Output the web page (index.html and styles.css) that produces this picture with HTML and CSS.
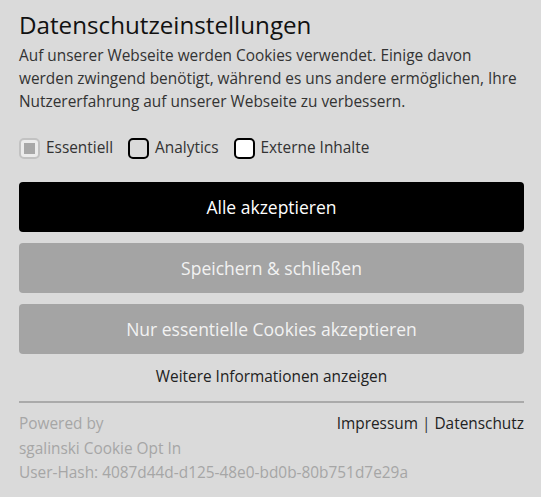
FILE: index.html
```html
<!DOCTYPE html>
<html lang="de">
<head>
<meta charset="utf-8">
<link rel="stylesheet" href="styles.css">
</head>
<body>
<div class="box">
  <h1 class="title">Datenschutzeinstellungen</h1>
  <p class="text">Auf unserer Webseite werden Cookies verwendet. Einige davon werden zwingend benötigt, während es uns andere ermöglichen, Ihre Nutzererfahrung auf unserer Webseite zu verbessern.</p>
  <div class="checks">
    <label class="check"><span class="cb cb-disabled"><span class="cb-fill"></span></span>Essentiell</label>
    <label class="check"><span class="cb cb-grey"></span>Analytics</label>
    <label class="check"><span class="cb cb-white"></span>Externe Inhalte</label>
  </div>
  <div class="buttons">
    <button class="btn btn-primary">Alle akzeptieren</button>
    <button class="btn btn-secondary">Speichern &amp; schließen</button>
    <button class="btn btn-secondary">Nur essentielle Cookies akzeptieren</button>
  </div>
  <div class="more">Weitere Informationen anzeigen</div>
  <div class="footer">
    <div class="powered">
      <div>Powered by</div>
      <div>sgalinski Cookie Opt In</div>
      <div>User-Hash: 4087d44d-d125-48e0-bd0b-80b751d7e29a</div>
    </div>
    <div class="links"><a href="#">Impressum</a> | <a href="#">Datenschutz</a></div>
  </div>
</div>
</body>
</html>
```
FILE: styles.css
```css
html, body {
  margin: 0;
  padding: 0;
  background: #dadada;
}
body {
  font-family: "Open Sans", "Noto Sans", sans-serif;
  color: #333;
}
.box {
  padding: 9px 17px 0 19px;
}
.title {
  margin: 0;
  font-size: 24.2px;
  font-weight: 400;
  line-height: 32px;
  color: #111;
}
.text {
  margin: 3px 0 0;
  font-size: 15.4px;
  line-height: 23px;
  color: #333;
}
.checks {
  display: flex;
  gap: 15px;
  margin-top: 24px;
  align-items: center;
}
.check {
  display: flex;
  align-items: center;
  gap: 6px;
  font-size: 15.4px;
  line-height: 22px;
  color: #333;
}
.cb {
  box-sizing: border-box;
  width: 21px;
  height: 21px;
  border: 2px solid #000;
  border-radius: 5px;
  display: flex;
  align-items: center;
  justify-content: center;
}
.cb-disabled {
  border-color: #c2c2c2;
  background: #ececec;
}
.cb-fill {
  width: 11px;
  height: 11px;
  background: #a8a8a8;
}
.cb-grey { background: #dadada; }
.cb-white { background: #fff; }
.buttons {
  display: flex;
  flex-direction: column;
  gap: 11px;
  margin-top: 23px;
}
.btn {
  height: 50px;
  border: 0;
  border-radius: 4px;
  font-family: inherit;
  font-size: 17.5px;
  color: #fff;
  cursor: pointer;
}
.btn-primary { background: #000; }
.btn-secondary { background: #a4a4a4; color: #f2f2f2; }
.more {
  text-align: center;
  font-size: 15.4px;
  line-height: 22px;
  margin-top: 12px;
  color: #222;
}
.footer {
  margin-top: 13px;
  border-top: 2px solid #aaa;
  padding-top: 9px;
  display: flex;
  justify-content: space-between;
  font-size: 15.4px;
  line-height: 24.5px;
}
.powered { color: #a6a6a6; flex: 1; min-width: 0; white-space: nowrap; }
.links { color: #333; white-space: nowrap; }
.links a { color: #222; text-decoration: none; }
```
